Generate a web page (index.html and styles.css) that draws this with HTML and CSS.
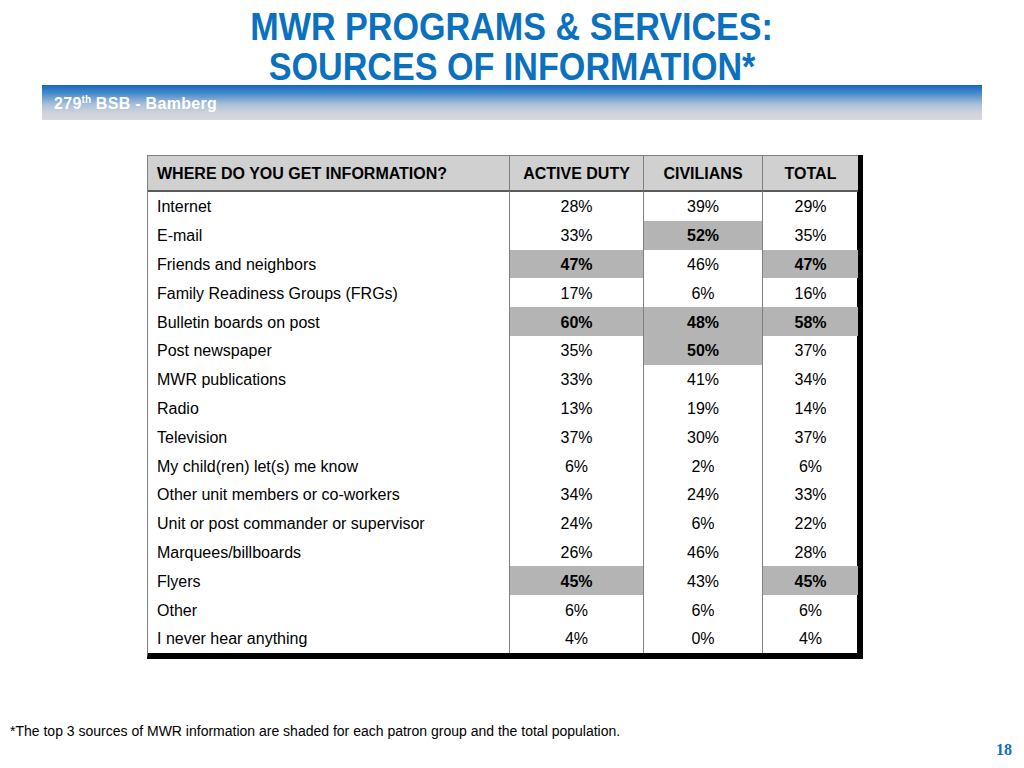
FILE: index.html
```html
<!DOCTYPE html>
<html>
<head>
<meta charset="utf-8">
<link rel="stylesheet" href="styles.css">
</head>
<body>
<div class="slide">
  <h1 class="title"><span class="tline">MWR PROGRAMS &amp; SERVICES:</span><br><span class="tline">SOURCES OF INFORMATION*</span></h1>
  <div class="banner">279<sup>th</sup> BSB - Bamberg</div>
  <div class="table">
    <div class="th first">WHERE DO YOU GET INFORMATION?</div>
    <div class="th">ACTIVE DUTY</div>
    <div class="th">CIVILIANS</div>
    <div class="th last">TOTAL</div>

    <div class="td first">Internet</div><div class="td">28%</div><div class="td">39%</div><div class="td last">29%</div>
    <div class="td first">E-mail</div><div class="td">33%</div><div class="td hi">52%</div><div class="td last">35%</div>
    <div class="td first">Friends and neighbors</div><div class="td hi">47%</div><div class="td">46%</div><div class="td last hi">47%</div>
    <div class="td first">Family Readiness Groups (FRGs)</div><div class="td">17%</div><div class="td">6%</div><div class="td last">16%</div>
    <div class="td first">Bulletin boards on post</div><div class="td hi">60%</div><div class="td hi">48%</div><div class="td last hi">58%</div>
    <div class="td first">Post newspaper</div><div class="td">35%</div><div class="td hi">50%</div><div class="td last">37%</div>
    <div class="td first">MWR publications</div><div class="td">33%</div><div class="td">41%</div><div class="td last">34%</div>
    <div class="td first">Radio</div><div class="td">13%</div><div class="td">19%</div><div class="td last">14%</div>
    <div class="td first">Television</div><div class="td">37%</div><div class="td">30%</div><div class="td last">37%</div>
    <div class="td first">My child(ren) let(s) me know</div><div class="td">6%</div><div class="td">2%</div><div class="td last">6%</div>
    <div class="td first">Other unit members or co-workers</div><div class="td">34%</div><div class="td">24%</div><div class="td last">33%</div>
    <div class="td first">Unit or post commander or supervisor</div><div class="td">24%</div><div class="td">6%</div><div class="td last">22%</div>
    <div class="td first">Marquees/billboards</div><div class="td">26%</div><div class="td">46%</div><div class="td last">28%</div>
    <div class="td first">Flyers</div><div class="td hi">45%</div><div class="td">43%</div><div class="td last hi">45%</div>
    <div class="td first">Other</div><div class="td">6%</div><div class="td">6%</div><div class="td last">6%</div>
    <div class="td first">I never hear anything</div><div class="td">4%</div><div class="td">0%</div><div class="td last">4%</div>
  </div>
  <p class="note">*The top 3 sources of MWR information are shaded for each patron group and the total population.</p>
  <div class="pagenum">18</div>
</div>
</body>
</html>
```

FILE: styles.css
```css
* { box-sizing: border-box; }
html, body { margin: 0; padding: 0; background: #fff; }
body { font-family: "Liberation Sans", Arial, sans-serif; color: #000; }

.slide {
  width: 1024px;
  height: 768px;
  display: flex;
  flex-direction: column;
  overflow: hidden;
}

.title {
  margin: 7px 0 0 0;
  text-align: center;
  font-family: "Liberation Sans", Arial, sans-serif;
  font-weight: bold;
  font-size: 39px;
  line-height: 40px;
  color: #0b70bd;
}
.tline {
  display: inline-block;
  transform: scaleX(0.875);
  transform-origin: center;
  white-space: nowrap;
}

.banner {
  margin: -2px 42px 0 42px;
  height: 35px;
  background: linear-gradient(to bottom, #1568bd 0%, #4a8ccd 25%, #a9c0d9 55%, #cfd3da 80%, #d8d8dc 100%);
  color: #fff;
  font-weight: bold;
  font-size: 16px;
  letter-spacing: 0.3px;
  padding: 10px 0 0 12px;
  line-height: 17px;
}
.banner sup {
  font-size: 10px;
  letter-spacing: 0;
  line-height: 0;
  vertical-align: 6px;
}

.table {
  margin: 35px 0 0 147px;
  width: 716px;
  display: grid;
  grid-template-columns: 362px 134px 119px 95px;
  grid-template-rows: 37px;
  grid-auto-rows: 28.8px;
  border-left: 1px solid #808080;
  border-right: 6px solid #000;
  border-bottom: 6px solid #000;
  font-size: 16px;
}

.th {
  background: #d0d0d0;
  border-top: 1px solid #808080;
  border-bottom: 2px solid #5a5a5a;
  border-right: 1px solid #808080;
  font-weight: bold;
  display: flex;
  align-items: center;
  justify-content: center;
  padding-top: 1px;
}
.th.first { justify-content: flex-start; padding-left: 9px; }
.th.last { border-right: none; }

.td {
  border-right: 1px solid #808080;
  display: flex;
  align-items: center;
  justify-content: center;
  padding-top: 2px;
}
.td.first { justify-content: flex-start; padding-left: 9px; }
.td.last { border-right: none; }
.td.hi {
  background: #b4b4b4;
  font-weight: bold;
}

.note {
  margin: 64px 0 0 10px;
  font-size: 14px;
  line-height: 16px;
}

.pagenum {
  margin: 2px 12px 0 0;
  text-align: right;
  font-family: "Liberation Serif", "Times New Roman", serif;
  font-weight: bold;
  font-size: 16px;
  line-height: 18px;
  color: #0b70bd;
}
```
